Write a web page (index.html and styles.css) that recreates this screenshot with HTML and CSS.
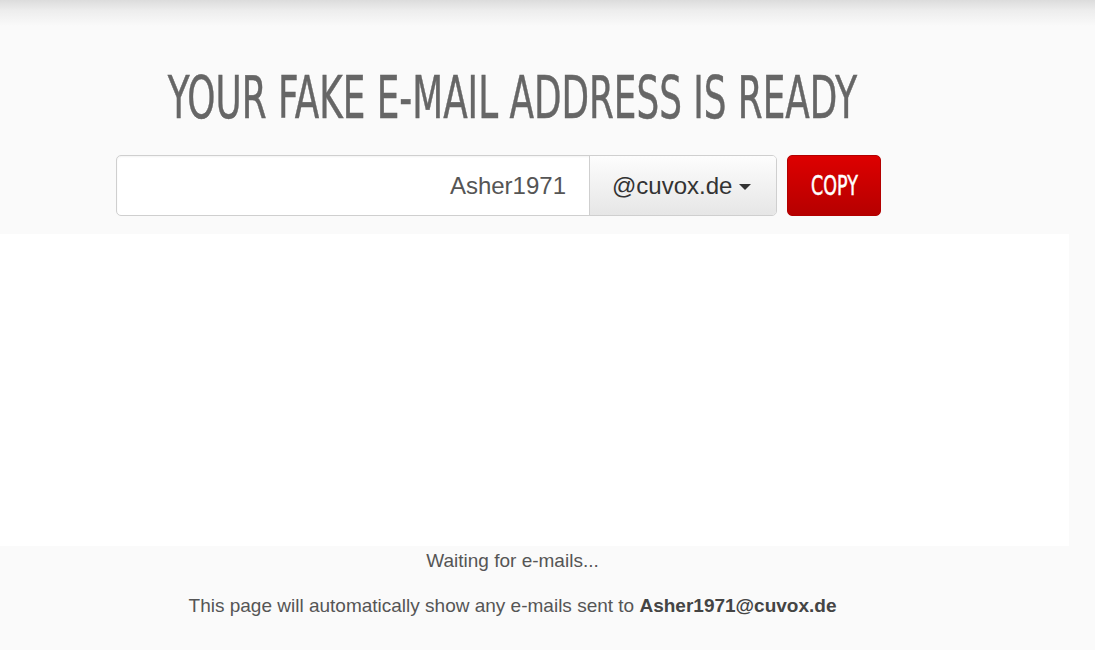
FILE: index.html
```html
<!DOCTYPE html>
<html lang="en">
<head>
<meta charset="utf-8">
<title>Fake E-Mail Address</title>
<link rel="stylesheet" href="styles.css">
</head>
<body>
<div class="topshade"></div>
<main class="hero">
  <h1 class="title"><span class="title-text">YOUR FAKE E-MAIL ADDRESS IS READY</span></h1>
  <div class="mail-row">
    <div class="input-group">
      <div class="user-input">Asher1971</div>
      <div class="domain-select">@cuvox.de <span class="caret"></span></div>
    </div>
    <button class="copy-btn"><span class="copy-text">COPY</span></button>
  </div>
</main>
<section class="inbox"></section>
<section class="status">
  <p class="waiting">Waiting for e-mails...</p>
  <p class="info">This page will automatically show any e-mails sent to <strong>Asher1971@cuvox.de</strong></p>
</section>
</body>
</html>
```

FILE: styles.css
```css
html, body {
  margin: 0;
  padding: 0;
}
body {
  background: #fafafa;
  font-family: "Liberation Sans", Arial, sans-serif;
  color: #555;
}
.topshade {
  height: 26px;
  background: linear-gradient(to bottom, #dcdcdc 0%, #ededed 40%, #fafafa 100%);
}
.hero {
  width: 1025px;
  text-align: center;
}
.title {
  margin: 0;
  padding-top: 42px;
  height: 78px;
  font-family: "DejaVu Sans Condensed", "DejaVu Sans", sans-serif;
  font-stretch: condensed;
  font-weight: normal;
  font-size: 59px;
  line-height: 60px;
  color: #666;
  white-space: nowrap;
}
.title-text {
  display: inline-block;
  transform: scaleX(0.674);
  -webkit-text-stroke: 0.5px #666;
}
.mail-row {
  display: flex;
  margin-left: 116px;
  margin-top: 9px;
  gap: 10px;
  height: 61px;
}
.input-group {
  display: flex;
  border: 1px solid #cfcfcf;
  border-radius: 5px;
  background: #fff;
  box-shadow: inset 0 1px 2px rgba(0,0,0,0.05);
}
.user-input {
  width: 449px;
  padding-right: 23px;
  text-align: right;
  font-size: 24px;
  line-height: 59px;
  color: #555;
}
.domain-select {
  width: 142px;
  padding: 0 22px 0 22px;
  border-left: 1px solid #cfcfcf;
  border-radius: 0 4px 4px 0;
  background: linear-gradient(to bottom, #fdfdfd 0%, #e6e6e6 100%);
  font-size: 24px;
  line-height: 59px;
  color: #333;
  display: flex;
  align-items: center;
  gap: 7px;
}
.caret {
  width: 0;
  height: 0;
  border-left: 6px solid transparent;
  border-right: 6px solid transparent;
  border-top: 6px solid #333;
  margin-top: 2px;
}
.copy-btn {
  width: 94px;
  height: 61px;
  border: 1px solid #b30000;
  border-radius: 5px;
  background: linear-gradient(to bottom, #dd0000 0%, #b60000 100%);
  color: #fff;
  padding: 0;
  cursor: pointer;
  font-family: "DejaVu Sans Condensed", "DejaVu Sans", sans-serif;
  font-stretch: condensed;
  font-size: 27px;
}
.copy-text {
  display: inline-block;
  transform: scaleX(0.72);
  -webkit-text-stroke: 0.5px #fff;
}
.inbox {
  width: 1069px;
  height: 312px;
  margin-top: 18px;
  background: #fff;
}
.status {
  width: 1025px;
  text-align: center;
  font-size: 19px;
  color: #555;
}
.waiting {
  margin: 4px 0 0;
  line-height: 22px;
}
.info {
  margin: 23px 0 0;
  line-height: 22px;
}
.info strong {
  color: #444;
}
```
